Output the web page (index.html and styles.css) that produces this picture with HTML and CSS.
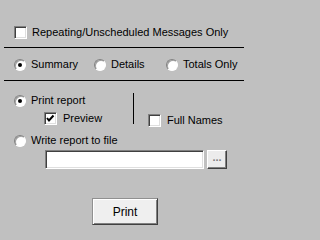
FILE: index.html
```html
<!DOCTYPE html>
<html>
<head>
<meta charset="utf-8">
<link rel="stylesheet" href="styles.css">
</head>
<body>
<div class="dlg">
  <div class="opt r1"><span class="chk"></span><span>Repeating/Unscheduled Messages Only</span></div>
  <div class="sep s1"></div>
  <div class="radios">
    <div class="opt w-sum"><span class="rad on"></span><span>Summary</span></div>
    <div class="opt w-det"><span class="rad"></span><span>Details</span></div>
    <div class="opt"><span class="rad"></span><span>Totals Only</span></div>
  </div>
  <div class="sep s2"></div>
  <div class="print-sec">
    <div class="left">
      <div class="opt"><span class="rad on"></span><span>Print report</span></div>
      <div class="opt sub"><span class="chk"><svg class="tick" width="11" height="11" viewBox="0 0 11 11"><polyline points="2,5 4,7.5 8.5,2.5" fill="none" stroke="#000" stroke-width="2"/></svg></span><span>Preview</span></div>
    </div>
    <div class="vline"></div>
    <div class="opt full"><span class="chk"></span><span>Full Names</span></div>
  </div>
  <div class="opt write"><span class="rad"></span><span>Write report to file</span></div>
  <div class="file"><div class="tb"></div><div class="browse">...</div></div>
  <div class="actions"><button class="btn">Print</button></div>
</div>
</body>
</html>
```
FILE: styles.css
```css
html, body {
  margin: 0;
  padding: 0;
}
body {
  background: #c0c0c0;
  font-family: "Liberation Sans", Arial, sans-serif;
  font-size: 11px;
  color: #000;
  width: 249px;
  height: 230px;
  overflow: hidden;
}
.dlg {
  padding-top: 26px;
}
.opt {
  display: flex;
  align-items: center;
  height: 13px;
  line-height: 13px;
  white-space: nowrap;
}
.chk {
  box-sizing: border-box;
  width: 13px;
  height: 13px;
  flex: none;
  background: #fff;
  border: 1px solid;
  border-color: #808080 #ffffff #ffffff #808080;
  box-shadow: inset 1px 1px #404040, inset -1px -1px #dfdfdf;
  margin-right: 5px;
  position: relative;
}
.tick {
  display: block;
  position: absolute;
  left: 0;
  top: 0;
}
.rad {
  box-sizing: border-box;
  width: 12px;
  height: 12px;
  flex: none;
  border-radius: 50%;
  background: #fff;
  border: 1px solid;
  border-color: #808080 #ffffff #ffffff #808080;
  box-shadow: inset 1px 1px #a0a0a0;
  margin-right: 5px;
  position: relative;
}
.rad.on::after {
  content: "";
  position: absolute;
  left: 3px;
  top: 3px;
  width: 4px;
  height: 4px;
  border-radius: 50%;
  background: #000;
}
.r1 {
  margin-left: 14px;
}
.sep {
  height: 1px;
  width: 240px;
  margin-left: 4px;
  background: #000;
}
.s1 {
  margin-top: 8px;
}
.radios {
  display: flex;
  margin-top: 10px;
  padding-left: 14px;
}
.w-sum {
  width: 80px;
}
.w-det {
  width: 72px;
}
.s2 {
  margin-top: 9px;
}
.print-sec {
  display: flex;
  align-items: flex-start;
  margin-top: 13px;
  padding-left: 14px;
  height: 33px;
}
.left {
  width: 119px;
  flex: none;
}
.sub {
  margin-top: 5px;
  margin-left: 30px;
}
.sub .chk {
  margin-right: 6px;
}
.vline {
  width: 1px;
  height: 31px;
  margin-top: -1px;
  background: #000;
  flex: none;
}
.full {
  margin-left: 14px;
  margin-top: 20px;
}
.full .chk {
  margin-right: 6px;
}
.write {
  margin-top: 7px;
  margin-left: 14px;
}
.file {
  display: flex;
  margin-top: 3px;
  padding-left: 45px;
}
.tb {
  box-sizing: border-box;
  width: 159px;
  height: 19px;
  background: #fff;
  border: 1px solid;
  border-color: #808080 #ffffff #ffffff #808080;
  box-shadow: inset 1px 1px #404040, inset -1px -1px #dfdfdf;
}
.browse {
  box-sizing: border-box;
  width: 20px;
  height: 19px;
  margin-left: 3px;
  background: #ececec;
  border: 1px solid;
  border-color: #ffffff #404040 #404040 #ffffff;
  box-shadow: inset -1px -1px #808080;
  color: #808080;
  font-weight: bold;
  font-size: 11px;
  line-height: 13px;
  text-align: center;
  letter-spacing: 0;
}
.actions {
  margin-top: 29px;
  padding-left: 92px;
}
.btn {
  box-sizing: border-box;
  display: block;
  width: 66px;
  height: 27px;
  margin: 0;
  padding: 0;
  font-family: "Liberation Sans", Arial, sans-serif;
  font-size: 12px;
  color: #000;
  background: #efefef;
  border: 1px solid;
  border-color: #909090 #404040 #404040 #909090;
  box-shadow: inset 1px 1px #ffffff, inset -1px -1px #808080;
}
```
